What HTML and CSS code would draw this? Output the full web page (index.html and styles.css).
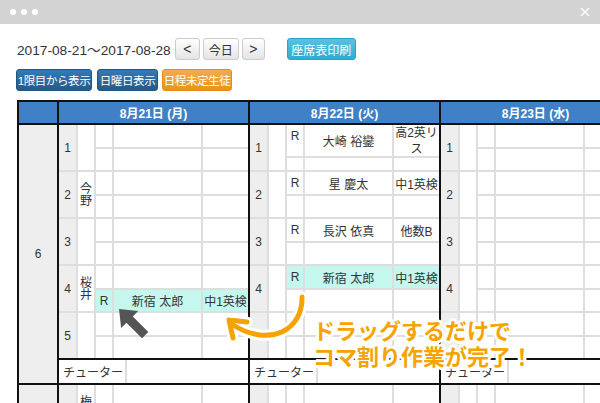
FILE: index.html
```html
<!DOCTYPE html>
<html lang="ja">
<head>
<meta charset="utf-8">
<title>座席表</title>
<link rel="stylesheet" href="styles.css">
</head>
<body>
<div class="titlebar">
  <span class="dot"></span><span class="dot"></span><span class="dot"></span>
  <svg class="close" width="10" height="10" viewBox="0 0 10 10"><path d="M1 1L9 9M9 1L1 9" stroke="#fff" stroke-width="1.3"/></svg>
</div>
<div class="toolbar">
  <div class="row1">
    <span class="date">2017-08-21～2017-08-28</span>
    <span class="btn btn-default nav-l">&lt;</span>
    <span class="btn btn-default today">今日</span>
    <span class="btn btn-default nav-r">&gt;</span>
    <span class="btn btn-info print">座席表印刷</span>
  </div>
  <div class="row2">
    <span class="btn btn-primary b1">1限目から表示</span>
    <span class="btn btn-primary b2">日曜日表示</span>
    <span class="btn btn-warning b3">日程未定生徒</span>
  </div>
</div>

<div class="sched">
  <div class="hcell"></div>
  <div class="hcell">8月21日 (月)</div>
  <div class="hcell">8月22日 (火)</div>
  <div class="hcell">8月23日 (水)</div>

  <div class="lcell">6</div>

  <!-- day 1 -->
  <div class="day">
    <div class="period">
      <div class="c pn">1</div><div class="c tc"></div>
      <div class="c"></div><div class="c"></div><div class="c"></div>
      <div class="c"></div><div class="c"></div><div class="c"></div>
    </div>
    <div class="period">
      <div class="c pn">2</div><div class="c tc">今野</div>
      <div class="c"></div><div class="c"></div><div class="c"></div>
      <div class="c"></div><div class="c"></div><div class="c"></div>
    </div>
    <div class="period">
      <div class="c pn">3</div><div class="c tc"></div>
      <div class="c"></div><div class="c"></div><div class="c"></div>
      <div class="c"></div><div class="c"></div><div class="c"></div>
    </div>
    <div class="period">
      <div class="c pn">4</div><div class="c tc">桜井</div>
      <div class="c"></div><div class="c"></div><div class="c"></div>
      <div class="c cy">R</div><div class="c cy">新宿 太郎</div><div class="c cy">中1英検</div>
    </div>
    <div class="period last">
      <div class="c pn">5</div><div class="c tc"></div>
      <div class="c"></div><div class="c"></div><div class="c"></div>
      <div class="c"></div><div class="c"></div><div class="c"></div>
    </div>
    <div class="tutor"><div class="lab">チューター</div><div class="rest"></div></div>
  </div>

  <!-- day 2 -->
  <div class="day">
    <div class="period tall">
      <div class="c pn">1</div><div class="c tc"></div>
      <div class="c rt">R</div><div class="c">大崎 裕鑾</div><div class="c wrap">高2英リス</div>
      <div class="c"></div><div class="c"></div><div class="c"></div>
    </div>
    <div class="period">
      <div class="c pn">2</div><div class="c tc"></div>
      <div class="c rt">R</div><div class="c">星 慶太</div><div class="c">中1英検</div>
      <div class="c"></div><div class="c"></div><div class="c"></div>
    </div>
    <div class="period">
      <div class="c pn">3</div><div class="c tc"></div>
      <div class="c rt">R</div><div class="c">長沢 依真</div><div class="c">他数B</div>
      <div class="c"></div><div class="c"></div><div class="c"></div>
    </div>
    <div class="period">
      <div class="c pn">4</div><div class="c tc"></div>
      <div class="c cy">R</div><div class="c cy">新宿 太郎</div><div class="c cy">中1英検</div>
      <div class="c"></div><div class="c"></div><div class="c"></div>
    </div>
    <div class="period last">
      <div class="c pn">5</div><div class="c tc"></div>
      <div class="c"></div><div class="c"></div><div class="c"></div>
      <div class="c"></div><div class="c"></div><div class="c"></div>
    </div>
    <div class="tutor"><div class="lab">チューター</div><div class="rest"></div></div>
  </div>

  <!-- day 3 -->
  <div class="day">
    <div class="period">
      <div class="c pn">1</div><div class="c tc"></div>
      <div class="c"></div><div class="c"></div><div class="c"></div>
      <div class="c"></div><div class="c"></div><div class="c"></div>
    </div>
    <div class="period">
      <div class="c pn">2</div><div class="c tc"></div>
      <div class="c"></div><div class="c"></div><div class="c"></div>
      <div class="c"></div><div class="c"></div><div class="c"></div>
    </div>
    <div class="period">
      <div class="c pn">3</div><div class="c tc"></div>
      <div class="c"></div><div class="c"></div><div class="c"></div>
      <div class="c"></div><div class="c"></div><div class="c"></div>
    </div>
    <div class="period">
      <div class="c pn">4</div><div class="c tc"></div>
      <div class="c"></div><div class="c"></div><div class="c"></div>
      <div class="c"></div><div class="c"></div><div class="c"></div>
    </div>
    <div class="period last">
      <div class="c pn">5</div><div class="c tc"></div>
      <div class="c"></div><div class="c"></div><div class="c"></div>
      <div class="c"></div><div class="c"></div><div class="c"></div>
    </div>
    <div class="tutor"><div class="lab">チューター</div><div class="rest"></div></div>
  </div>

  <!-- next block -->
  <div class="lcell"></div>
  <div class="day">
    <div class="period">
      <div class="c pn">1</div><div class="c tc">梅田</div>
      <div class="c"></div><div class="c"></div><div class="c"></div>
      <div class="c"></div><div class="c"></div><div class="c"></div>
    </div>
  </div>
  <div class="day">
    <div class="period">
      <div class="c pn">1</div><div class="c tc"></div>
      <div class="c"></div><div class="c"></div><div class="c"></div>
      <div class="c"></div><div class="c"></div><div class="c"></div>
    </div>
  </div>
  <div class="day">
    <div class="period">
      <div class="c pn">1</div><div class="c tc"></div>
      <div class="c"></div><div class="c"></div><div class="c"></div>
      <div class="c"></div><div class="c"></div><div class="c"></div>
    </div>
  </div>
</div>

<div class="annot">
  <svg class="annot-svg" width="600" height="403" viewBox="0 0 600 403">
    <g fill="none" stroke-linecap="round" stroke-linejoin="round">
      <path d="M302 297 C303 330 270 348 233 325" stroke="#fff" stroke-width="11"/>
      <path d="M229 320 L247 322 M229 320 L233 338" stroke="#fff" stroke-width="11"/>
      <path d="M302 297 C303 330 270 348 233 325" stroke="#f6a300" stroke-width="5"/>
      <path d="M229 320 L247 322 M229 320 L233 338" stroke="#f6a300" stroke-width="5"/>
    </g>
    <polygon transform="translate(119 309) rotate(-45)" points="0,0 -12,15 -4.5,15 -4.5,37 4.5,37 4.5,15 12,15" fill="#555"/>
  </svg>
  <div class="annot-text">ドラッグするだけで<br>コマ割り作業が完了！</div>
</div>
</body>
</html>
```

FILE: styles.css
```css
* { box-sizing: border-box; }

body {
  margin: 0;
  width: 600px;
  height: 403px;
  overflow: hidden;
  position: relative;
  background: #fff;
  color: #333;
  font-family: "Liberation Sans", "Noto Sans CJK JP", sans-serif;
}

.titlebar {
  height: 24px;
  background: #d3d3d3;
  display: flex;
  align-items: center;
  gap: 5px;
  padding-left: 10px;
}
.dot {
  width: 6px;
  height: 6px;
  border-radius: 50%;
  background: #fff;
}
.close {
  margin-left: auto;
  margin-right: 10px;
}

.toolbar {
  padding: 14px 0 0 17px;
}
.row1 {
  display: flex;
  align-items: center;
  height: 22px;
}
.date {
  font-size: 13.7px;
  color: #333;
}
.row2 {
  display: flex;
  gap: 4px;
  height: 22px;
  margin-top: 9px;
  margin-left: -1px;
}

.btn {
  height: 22px;
  display: flex;
  align-items: center;
  justify-content: center;
  border: 1px solid;
  border-radius: 3px;
  font-size: 12px;
  padding: 0;
  white-space: nowrap;
}
.btn-default {
  background: linear-gradient(#fff, #e4e4e4);
  border-color: #ccc;
  color: #333;
}
.btn-info {
  background: linear-gradient(#5bc0de, #2eadd3);
  border-color: #28a4c9;
  color: #fff;
}
.btn-primary {
  background: linear-gradient(#337ab7, #265a88);
  border-color: #245580;
  color: #fff;
  font-size: 11.5px;
  letter-spacing: -0.4px;
}
.btn-warning {
  background: linear-gradient(#f0ad4e, #eb9316);
  border-color: #e38d13;
  color: #fff;
  font-size: 11.5px;
  letter-spacing: -0.4px;
}
.nav-l { width: 25px; margin-left: 4px; font-size: 14px; }
.today { width: 36px; margin-left: 3px; }
.nav-r { width: 23px; margin-left: 3px; font-size: 14px; }
.print { width: 69px; margin-left: 22px; }
.b1 { width: 76px; }
.b2 { width: 61px; margin-left: 1px; }
.b3 { width: 70px; }

/* schedule */
.sched {
  margin: 9px 0 0 17px;
  display: grid;
  grid-template-columns: 40px 191px 191px 191px;
  width: max-content;
  border-top: 2px solid #111;
  border-left: 2px solid #111;
}
.hcell {
  height: 23px;
  background: #4080c6;
  color: #fff;
  font-weight: bold;
  font-size: 12px;
  display: flex;
  align-items: center;
  justify-content: center;
  border-right: 2px solid #111;
  border-bottom: 2px solid #111;
}
.lcell {
  background: #eee;
  display: flex;
  align-items: center;
  justify-content: center;
  font-size: 12px;
  border-right: 2px solid #111;
  border-bottom: 2px solid #111;
}
.day {
  display: flex;
  flex-direction: column;
  border-right: 2px solid #111;
  border-bottom: 2px solid #111;
}
.period {
  display: grid;
  grid-template-columns: 17px 16px 16px 87px 1fr;
  grid-template-rows: 22px 21px;
  gap: 2px;
  background: #dedede;
  border-bottom: 2px solid #dedede;
}
.period.tall {
  grid-template-rows: 31px 12px;
}
.period.last {
  border-bottom-color: #111;
}
.c {
  background: #fff;
  display: flex;
  align-items: center;
  justify-content: center;
  font-size: 12px;
  color: #333;
  text-align: center;
  overflow: hidden;
}
.pn {
  grid-row: span 2;
  background: #eee;
}
.tc {
  grid-row: span 2;
  line-height: 12px;
  word-break: break-all;
}
.rt {
  align-items: flex-start;
  padding-top: 4px;
}
.cy {
  background: #c4f7ee;
}
.wrap {
  line-height: 16px;
  align-items: flex-start;
}
.tutor {
  height: 23px;
  display: flex;
  background: #fff;
}
.tutor .lab {
  width: 68px;
  border-right: 2px solid #dedede;
  display: flex;
  align-items: center;
  padding-left: 4px;
  font-size: 12px;
  white-space: nowrap;
}
.tutor .rest {
  flex: 1;
}

/* annotation overlay */
.annot {
  position: absolute;
  left: 0;
  top: 0;
  width: 600px;
  height: 403px;
  pointer-events: none;
}
.annot-svg {
  position: absolute;
  left: 0;
  top: 0;
}
.annot-text {
  position: absolute;
  left: 313px;
  top: 316px;
  font-family: "Noto Sans CJK JP", sans-serif;
  font-weight: bold;
  font-size: 22px;
  line-height: 26px;
  color: #f6a300;
  white-space: nowrap;
  text-shadow:
    3px 0 0 #fff, -3px 0 0 #fff, 0 3px 0 #fff, 0 -3px 0 #fff,
    2px 2px 0 #fff, -2px -2px 0 #fff, 2px -2px 0 #fff, -2px 2px 0 #fff,
    0 0 4px #fff;
}
```
